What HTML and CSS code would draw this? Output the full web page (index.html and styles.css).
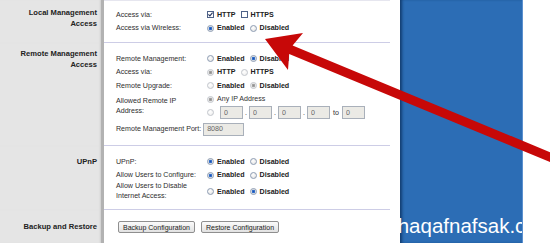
FILE: index.html
```html
<!DOCTYPE html>
<html lang="en">
  <head>
    <meta charset="UTF-8" />
    <meta name="viewport" content="width=device-width, initial-scale=1.0" />
    <title>Management</title>
    <link rel="stylesheet" href="styles.css">
  </head>
  <body>
    <div class="page">
      <form class="settings">
        <!-- local access -->
        <section class="section section--local">
          <h3 class="section-title">Local Management<br>Access</h3>
          <div class="section-body">
            <div class="row">
              <span class="label">Access via:</span>
              <span class="value">
                <label class="opt"><span class="check"><svg width="5" height="5" viewBox="0 0 5 5"><path d="M0.4 2.4 L1.9 3.9 L4.6 0.6" fill="none" stroke="#24355f" stroke-width="1.1"/></svg></span>HTTP</label>
                <label class="opt"><span class="check"></span>HTTPS</label>
              </span>
            </div>
            <div class="row">
              <span class="label">Access via Wireless:</span>
              <span class="value">
                <label class="opt"><input class="radio" type="radio" name="wireless" checked>Enabled</label>
                <label class="opt"><input class="radio" type="radio" name="wireless">Disabled</label>
              </span>
            </div>
          </div>
        </section>

        <!-- remote access -->
        <section class="section section--remote">
          <h3 class="section-title">Remote Management<br>Access</h3>
          <div class="section-body">
            <div class="row">
              <span class="label">Remote Management:</span>
              <span class="value">
                <label class="opt"><input class="radio" type="radio" name="remote">Enabled</label>
                <label class="opt"><input class="radio" type="radio" name="remote" checked>Disabled</label>
              </span>
            </div>
            <div class="row">
              <span class="label">Access via:</span>
              <span class="value">
                <label class="opt"><input class="radio" type="radio" name="remoteVia" checked disabled>HTTP</label>
                <label class="opt"><input class="radio" type="radio" name="remoteVia" disabled>HTTPS</label>
              </span>
            </div>
            <div class="row">
              <span class="label">Remote Upgrade:</span>
              <span class="value">
                <label class="opt"><input class="radio" type="radio" name="upgrade" disabled>Enabled</label>
                <label class="opt"><input class="radio" type="radio" name="upgrade" checked disabled>Disabled</label>
              </span>
            </div>
            <div class="row row--double">
              <span class="label label--wrap">Allowed Remote IP<br>Address:</span>
              <div class="value value--stack">
                <label class="opt opt--plain"><input class="radio" type="radio" name="ip" checked disabled>Any IP Address</label>
                <div class="ip-range">
                  <input class="radio radio--wide" type="radio" name="ip" disabled>
                  <input class="field field--ip" type="text" value="0" disabled>
                  <span class="dot">.</span>
                  <input class="field field--ip" type="text" value="0" disabled>
                  <span class="dot">.</span>
                  <input class="field field--ip" type="text" value="0" disabled>
                  <span class="dot">.</span>
                  <input class="field field--ip" type="text" value="0" disabled>
                  <span class="to">to</span>
                  <input class="field field--ip" type="text" value="0" disabled>
                </div>
              </div>
            </div>
            <div class="row row--port">
              <span class="label">Remote Management Port:</span>
              <input class="field field--port" type="text" value="8080" disabled>
            </div>
          </div>
        </section>

        <!-- upnp -->
        <section class="section section--upnp">
          <h3 class="section-title">UPnP</h3>
          <div class="section-body">
            <div class="row">
              <span class="label">UPnP:</span>
              <span class="value">
                <label class="opt"><input class="radio" type="radio" name="upnp" checked>Enabled</label>
                <label class="opt"><input class="radio" type="radio" name="upnp">Disabled</label>
              </span>
            </div>
            <div class="row">
              <span class="label">Allow Users to Configure:</span>
              <span class="value">
                <label class="opt"><input class="radio" type="radio" name="configure" checked>Enabled</label>
                <label class="opt"><input class="radio" type="radio" name="configure">Disabled</label>
              </span>
            </div>
            <div class="row row--tall">
              <span class="label label--tight">Allow Users to Disable<br>Internet Access:</span>
              <span class="value">
                <label class="opt"><input class="radio" type="radio" name="disableNet">Enabled</label>
                <label class="opt"><input class="radio" type="radio" name="disableNet" checked>Disabled</label>
              </span>
            </div>
          </div>
        </section>

        <!-- backup -->
        <section class="section section--backup">
          <h3 class="section-title">Backup and Restore</h3>
          <div class="section-body">
            <div class="buttons">
              <button type="button" class="btn">Backup Configuration</button>
              <button type="button" class="btn">Restore Configuration</button>
            </div>
          </div>
        </section>
      </form>

      <div class="banner">
        <span class="watermark">thaqafnafsak.com</span>
      </div>

      <!-- red pointer arrow -->
      <svg class="arrow" width="550" height="243" viewBox="0 0 550 243">
        <polygon points="265,39 303,33 292.6,45.5 571.7,161.2 568.3,169.6 289.2,53.9 288,70" fill="#c70808"/>
      </svg>
    </div>
  </body>
</html>
```

FILE: styles.css
```css
body {
  margin: 0;
  background-color: white;
  font-family: "Liberation Sans", Arial, sans-serif;
  font-size: 7.1px;
  color: #2e2e2e;
}
.page {
  position: relative;
  display: flex;
  width: 550px;
  height: 243px;
  overflow: hidden;
  background-color: white;
}
.settings {
  display: flex;
  flex-direction: column;
  width: 400px;
  flex-shrink: 0;
  margin: 0;
}
.section {
  display: grid;
  grid-template-columns: 104px 1fr;
}
.section-title {
  margin: 0;
  box-sizing: border-box;
  background-color: #e5e5e5;
  border-right: 3px solid #b2b2b2;
  box-shadow: inset -2px 0 2px -1px #cfcfcf;
  text-align: right;
  padding-right: 4px;
  font-size: 7.6px;
  font-weight: bold;
  line-height: 10.5px;
  color: #222;
}
.section-body {
  margin-right: 10px;
  padding-left: 12px;
  border-bottom: 1px solid #cdcde6;
}
.section--local .section-title {
  padding-top: 7px;
  line-height: 11px;
}
.section--local .section-body {
  border-top: 1px solid #e6e6ef;
  padding-top: 7px;
  padding-bottom: 7px;
}
.section--remote .section-title { padding-top: 6px; }
.section--remote .section-body { padding-top: 9px; padding-bottom: 9px; }
.section--upnp .section-title { padding-top: 11px; }
.section--upnp .section-body { padding-top: 9px; padding-bottom: 8px; }
.section--backup {
  flex: 1;
}
.section--backup .section-title { padding-top: 12px; }
.section--backup .section-body {
  padding-top: 11px;
  border-bottom: none;
}

.row {
  display: grid;
  grid-template-columns: 91px auto;
  align-items: center;
  justify-content: start;
  height: 13.5px;
}
.row--double { height: 27px; }
.row--tall { height: 19px; }
.row--port {
  grid-template-columns: auto auto;
  column-gap: 2px;
  margin-top: 3px;
}
.label {
  white-space: nowrap;
}
.label--wrap { line-height: 10px; }
.label--tight { line-height: 9.5px; }
.value {
  display: flex;
  align-items: center;
}
.value--stack {
  flex-direction: column;
  align-items: flex-start;
}
.value--stack > * {
  height: 13.5px;
}
.opt {
  display: flex;
  align-items: center;
  margin-right: 5px;
  font-weight: bold;
  color: #222;
}
.opt--plain {
  font-weight: normal;
  color: #333;
}
.radio {
  appearance: none;
  box-sizing: border-box;
  width: 7px;
  height: 7px;
  margin: 0 3px 0 0;
  border: 1px solid #8d9cb2;
  border-radius: 50%;
  background: radial-gradient(circle at 40% 35%, #fff 0, #dedede 100%);
}
.radio:checked {
  background: radial-gradient(circle, #1b4fae 0, #3b78d2 1.5px, #e9e9e9 2.1px);
}
.radio:disabled {
  border-color: #c2c6cc;
  background: radial-gradient(circle at 40% 35%, #fff 0, #ececec 100%);
}
.radio:disabled:checked {
  background: radial-gradient(circle, #8f8f8f 0, #a8a8a8 1.5px, #efefef 2.1px);
}
.radio--wide {
  margin-right: 6px;
}
.check {
  box-sizing: border-box;
  display: flex;
  align-items: center;
  justify-content: center;
  width: 7px;
  height: 7px;
  margin-right: 3px;
  border: 1px solid #4e6288;
  background-color: white;
}
.opt .check + * { margin: 0; }
.ip-range {
  display: flex;
  align-items: center;
}
.field {
  box-sizing: border-box;
  height: 13px;
  margin: 0;
  padding: 0 0 0 3px;
  border: 1px solid #a9b0ba;
  background-color: #ebeae5;
  font-family: "Liberation Sans", Arial, sans-serif;
  font-size: 7.1px;
  color: #666;
}
.field--ip { width: 23px; }
.field--port { width: 41px; }
.dot {
  margin: 0 2px;
}
.to {
  margin: 0 3px;
}
.buttons {
  display: flex;
  padding-left: 2px;
}
.btn {
  box-sizing: border-box;
  height: 12px;
  margin-right: 6px;
  padding: 0 4px;
  border: 1px solid #8f8f8f;
  border-radius: 2px;
  background: linear-gradient(#fbfbfb, #e2e2e2);
  font-family: "Liberation Sans", Arial, sans-serif;
  font-size: 7px;
  color: #222;
}

.banner {
  position: relative;
  width: 123px;
  flex-shrink: 0;
  overflow: hidden;
  background-color: #2c6db5;
  box-shadow: inset 3px 0 3px -1px #123d70;
  border-right: 1px solid #5b90cf;
  box-sizing: border-box;
}
.watermark {
  position: absolute;
  left: -8px;
  top: 216px;
  font-size: 20.5px;
  line-height: 1;
  color: white;
  white-space: nowrap;
}
.arrow {
  position: absolute;
  top: 0;
  left: 0;
  pointer-events: none;
}
```
